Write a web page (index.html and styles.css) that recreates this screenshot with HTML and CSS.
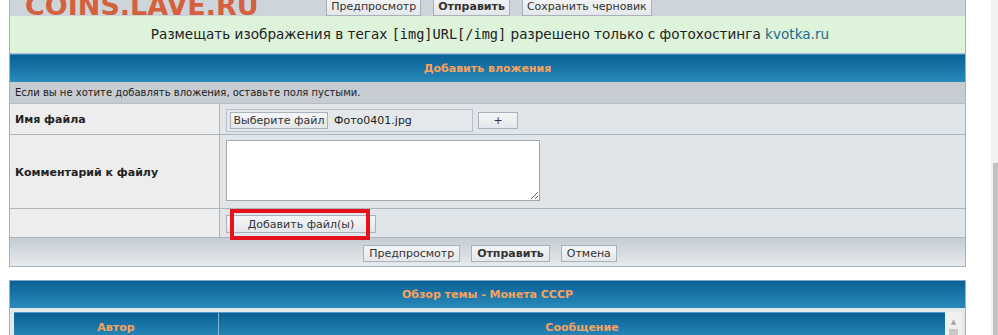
FILE: index.html
```html
<!DOCTYPE html>
<html lang="ru">
<head>
    <meta charset="UTF-8">
    <title>Добавить вложения</title>
    <link rel="stylesheet" href="styles.css">
</head>
<body>
    <div class="watermark">COINS.LAVE.RU</div>

    <div class="panel">
        <div class="toolbar">
            <button class="btn">Предпросмотр</button>
            <button class="btn btn-main">Отправить</button>
            <button class="btn">Сохранить черновик</button>
        </div>
        <div class="notice">Размещать изображения в тегах <span class="code">[img]URL[/img]</span> разрешено только с фотохостинга <a href="#">kvotka.ru</a></div>
        <div class="cat">Добавить вложения</div>
        <div class="info">Если вы не хотите добавлять вложения, оставьте поля пустыми.</div>

        <div class="form-grid">
            <div class="label">Имя файла</div>
            <div class="field field-file">
                <div class="file-input">
                    <span class="btn file-btn">Выберите файл</span>
                    <span class="file-name">Фото0401.jpg</span>
                </div>
                <button class="btn plus-btn">+</button>
            </div>

            <div class="label label-tall">Комментарий к файлу</div>
            <div class="field field-comment">
                <textarea class="comment"></textarea>
            </div>

            <div class="label label-last"></div>
            <div class="field field-add">
                <button class="btn add-btn">Добавить файл(ы)</button>
                <div class="highlight"></div>
            </div>
        </div>

        <div class="footer">
            <button class="btn">Предпросмотр</button>
            <button class="btn btn-main">Отправить</button>
            <button class="btn">Отмена</button>
        </div>
    </div>

    <div class="panel review">
        <div class="cat">Обзор темы - Монета СССР</div>
        <div class="review-body">
            <div class="review-head">
                <div class="col-author">Автор</div>
                <div class="col-msg">Сообщение</div>
            </div>
            <div class="inner-scroll">
                <span class="arrow">&#9650;</span>
                <span class="inner-thumb"></span>
            </div>
        </div>
    </div>

    <div class="page-scroll"><div class="page-thumb"></div></div>
</body>
</html>
```

FILE: styles.css
```css
body {
    margin: 0;
    background: #fff;
    font-family: "DejaVu Sans", Verdana, sans-serif;
    color: #222;
    overflow: hidden;
}

.watermark {
    position: absolute;
    top: -7px;
    left: 25px;
    font-size: 27px;
    line-height: 26px;
    font-weight: bold;
    color: #d4603e;
    z-index: 3;
}

.panel {
    width: 957px;
    margin-left: 9px;
    box-sizing: border-box;
    border: 1px solid #a4b0ba;
    border-top: 0;
    background: #dfe4e8;
}

.btn {
    font-family: "DejaVu Sans", Verdana, sans-serif;
    font-size: 11px;
    line-height: 13px;
    color: #333;
    background: linear-gradient(#f4f5f6, #e4e7ea);
    border: 1px solid #a9b2bb;
    padding: 1px 5px;
    margin: 0;
    border-radius: 0;
}
.btn-main {
    font-weight: bold;
}

.toolbar {
    height: 16px;
    background: #cdd4da;
    display: flex;
    justify-content: center;
    align-items: flex-end;
    gap: 12px;
    overflow: hidden;
    padding-left: 3px;
}
.toolbar .btn {
    height: 20px;
    flex: none;
    padding: 1px 4px;
}

.notice {
    height: 37px;
    line-height: 37px;
    background: #ddf3da;
    border-bottom: 1px solid #a7bccb;
    text-align: center;
    font-size: 13.6px;
    padding-left: 5px;
}
.notice .code {
    font-family: "DejaVu Sans Mono", monospace;
    font-size: 13.6px;
}
.notice a {
    color: #1d6b8c;
    text-decoration: none;
}

.cat {
    height: 28px;
    background: linear-gradient(#0a6096, #2a8aba);
    border-top: 1px solid #3c8fbf;
    box-sizing: border-box;
    color: #f6a35c;
    font-size: 11px;
    font-weight: bold;
    display: flex;
    align-items: center;
    justify-content: center;
}

.info {
    height: 21px;
    background: #c6ccd2;
    font-size: 10px;
    padding-left: 5px;
    display: flex;
    align-items: center;
}

.form-grid {
    display: grid;
    grid-template-columns: 210px 1fr;
    grid-template-rows: 31px 74px 29px;
    border-top: 1px solid #b4bec7;
}

.label {
    background: #ededed;
    border-right: 1px solid #aab5be;
    border-bottom: 1px solid #aab5be;
    padding-left: 5px;
    font-size: 11px;
    font-weight: bold;
    display: flex;
    align-items: center;
}
.label-tall {
    padding-top: 2px;
}

.field {
    background: #e0e5e9;
    border-bottom: 1px solid #aab5be;
    padding-left: 6px;
    display: flex;
    align-items: flex-start;
}

.field-file {
    padding-top: 5px;
}
.file-input {
    width: 247px;
    height: 23px;
    box-sizing: border-box;
    border: 1px solid #b9c2ca;
    background: #e4e8eb;
    display: flex;
    align-items: center;
    padding-left: 3px;
}
.file-btn {
    height: 17px;
    box-sizing: border-box;
    width: 98px;
    text-align: center;
    padding: 1px 0;
}
.file-name {
    font-size: 11px;
    margin-left: 6px;
}
.plus-btn {
    width: 40px;
    height: 17px;
    margin: 3px 0 0 5px;
    padding: 0;
}

.field-comment {
    padding-top: 5px;
}
.comment {
    width: 314px;
    height: 61px;
    box-sizing: border-box;
    border: 1px solid #a6a6a6;
    background: #fff;
    margin: 0;
}

.field-add {
    position: relative;
    padding-top: 5px;
}
.add-btn {
    width: 150px;
    height: 18px;
    margin-top: 1px;
}
.highlight {
    position: absolute;
    left: 10px;
    top: 0;
    width: 140px;
    height: 31px;
    box-sizing: border-box;
    border: 4px solid #e5121e;
}

.footer {
    height: 28px;
    background: linear-gradient(#c5ccd3, #e6eaed);
    display: flex;
    justify-content: center;
    align-items: center;
    gap: 11px;
    padding-left: 5px;
}
.footer .btn {
    height: 17px;
    margin-top: 2px;
}

.review {
    margin-top: 13px;
    border-top: 1px solid #7ea9c6;
    height: 60px;
    overflow: hidden;
}
.review .cat {
    height: 27px;
    border-top: 0;
}
.review-body {
    display: flex;
    padding: 4px 3px 0 4px;
    background: #e3e8ec;
}
.review-head {
    flex: 1;
    display: flex;
    height: 26px;
    background: linear-gradient(#0a6096, #2a8aba);
    border-top: 1px solid #4f9ac6;
    color: #f6a35c;
    font-size: 11px;
    font-weight: bold;
}
.col-author {
    width: 204px;
    border-right: 1px solid #7fb4d6;
    text-align: center;
    padding-top: 8px;
}
.col-msg {
    flex: 1;
    text-align: center;
    padding-top: 8px;
}
.inner-scroll {
    width: 17px;
    background: #f0f0f0;
    display: flex;
    flex-direction: column;
    align-items: center;
}
.arrow {
    font-size: 7px;
    color: #a3a3a3;
    margin-top: 6px;
}
.inner-thumb {
    width: 9px;
    height: 10px;
    margin-top: 3px;
    background: #c8c8c8;
}

.page-scroll {
    position: fixed;
    top: 0;
    right: 0;
    width: 7px;
    height: 100%;
    background: #f1f1f1;
}
.page-thumb {
    margin-top: 163px;
    margin-left: 2px;
    height: 200px;
    background: #c1c1c1;
}
```
